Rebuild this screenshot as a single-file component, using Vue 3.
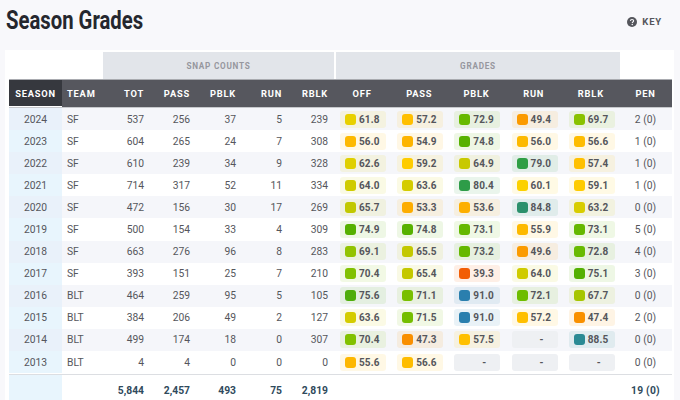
<script setup>
const stops = [[39,[242,92,5]],[47,[249,142,0]],[49.5,[251,154,0]],[53,[253,172,0]],[56,[253,185,0]],[57.5,[255,192,0]],[60,[253,209,0]],[62,[230,208,0]],[64,[207,203,0]],[66,[191,199,0]],[70,[133,194,0]],[72,[111,189,0]],[75,[85,176,0]],[79,[47,158,68]],[81,[46,155,74]],[85,[43,143,110]],[88.5,[42,138,148]],[91,[42,127,174]]]
function rgb(g) {
  let i = 0
  while (i < stops.length - 2 && g > stops[i + 1][0]) i++
  const [a, ca] = stops[i]
  const [b, cb] = stops[i + 1]
  const t = Math.min(1, Math.max(0, (g - a) / (b - a)))
  return ca.map((c, k) => Math.round(c + (cb[k] - c) * t)).join(',')
}
const rows = [
  ['2024','SF',537,256,37,5,239,[61.8,57.2,72.9,49.4,69.7],'2 (0)'],
  ['2023','SF',604,265,24,7,308,[56.0,54.9,74.8,56.0,56.6],'1 (0)'],
  ['2022','SF',610,239,34,9,328,[62.6,59.2,64.9,79.0,57.4],'1 (0)'],
  ['2021','SF',714,317,52,11,334,[64.0,63.6,80.4,60.1,59.1],'1 (0)'],
  ['2020','SF',472,156,30,17,269,[65.7,53.3,53.6,84.8,63.2],'0 (0)'],
  ['2019','SF',500,154,33,4,309,[74.9,74.8,73.1,55.9,73.1],'5 (0)'],
  ['2018','SF',663,276,96,8,283,[69.1,65.5,73.2,49.6,72.8],'4 (0)'],
  ['2017','SF',393,151,25,7,210,[70.4,65.4,39.3,64.0,75.1],'3 (0)'],
  ['2016','BLT',464,259,95,5,105,[75.6,71.1,91.0,72.1,67.7],'0 (0)'],
  ['2015','BLT',384,206,49,2,127,[63.6,71.5,91.0,57.2,47.4],'2 (0)'],
  ['2014','BLT',499,174,18,0,307,[70.4,47.3,57.5,null,88.5],'0 (0)'],
  ['2013','BLT',4,4,0,0,0,[55.6,56.6,null,null,null],'0 (0)'],
]
const snapHead = ['TOT','PASS','PBLK','RUN','RBLK']
const gradeHead = ['OFF','PASS','PBLK','RUN','RBLK']
const totals = ['5,844','2,457','493','75','2,819']
</script>

<template>
  <div class="page">
    <header class="top">
      <h1 class="title">Season Grades</h1>
      <div class="key">
        <svg class="key-icon" viewBox="0 0 16 16" width="10" height="10">
          <circle cx="8" cy="8" r="8" fill="#55565c" />
          <path d="M5.4 6.2C5.5 4.7 6.6 3.9 8 3.9c1.5 0 2.6.9 2.6 2.2 0 1-.6 1.5-1.3 2-.6.4-.8.7-.8 1.3" fill="none" stroke="#f8f8fb" stroke-width="1.8" />
          <circle cx="8.4" cy="12" r="1.2" fill="#f8f8fb" />
        </svg>
        <span>KEY</span>
      </div>
    </header>
    <section class="panel">
      <div class="bands">
        <div class="band band-snap">SNAP COUNTS</div>
        <div class="band band-grades">GRADES</div>
      </div>
      <div class="row head">
        <div class="season-h">SEASON</div>
        <div class="team">TEAM</div>
        <div v-for="h in snapHead" :key="'s' + h" class="num">{{ h }}</div>
        <div v-for="h in gradeHead" :key="'g' + h" class="ctr gh">{{ h }}</div>
        <div class="ctr">PEN</div>
      </div>
      <div v-for="(r, i) in rows" :key="r[0]" class="row body" :class="{ alt: i % 2 === 0 }">
        <div class="season">{{ r[0] }}</div>
        <div class="team">{{ r[1] }}</div>
        <div v-for="k in [2, 3, 4, 5, 6]" :key="k" class="num">{{ r[k] }}</div>
        <div v-for="(g, j) in r[7]" :key="j" class="gcell">
          <div v-if="g !== null" class="chip" :style="{ background: `rgba(${rgb(g)},.1)` }">
            <i class="dot" :style="{ background: `rgb(${rgb(g)})` }"></i>
            <b>{{ g.toFixed(1) }}</b>
          </div>
          <div v-else class="chip empty"><b>-</b></div>
        </div>
        <div class="ctr pen">{{ r[8] }}</div>
      </div>
      <div class="row total">
        <div class="season"></div>
        <div class="team"></div>
        <div v-for="t in totals" :key="t" class="num">{{ t }}</div>
        <div class="spacer"></div>
        <div class="ctr pen-total">19 (0)</div>
      </div>
    </section>
  </div>
</template>

<style scoped>
.page {
  height: 400px;
  overflow: hidden;
  background: #f8f8fb;
  font-family: Roboto, "Liberation Sans", sans-serif;
  color: #55565c;
}
.top {
  height: 50px;
  display: flex;
  justify-content: space-between;
  align-items: flex-start;
  padding: 0 18px 0 6px;
  box-sizing: border-box;
}
.title {
  margin: 5px 0 0;
  font-size: 26px;
  line-height: 30px;
  font-weight: 700;
  color: #25272e;
  transform: scaleX(.78);
  transform-origin: left center;
  white-space: nowrap;
}
.key {
  display: flex;
  align-items: center;
  gap: 5px;
  margin-top: 16px;
  font-size: 9.5px;
  line-height: 11px;
  font-weight: 700;
  letter-spacing: .8px;
  color: #55565c;
}
.key-icon { display: block; }
.panel {
  margin-left: 5px;
  width: 669px;
  height: 350px;
  background: #fff;
  padding: 2px 2px 0 4px;
  box-sizing: border-box;
}
.bands {
  display: flex;
  height: 27px;
  padding-left: 94px;
  box-sizing: border-box;
}
.band {
  background: #e2e5ea;
  color: #96979e;
  font-size: 8.2px;
  font-weight: 700;
  letter-spacing: .75px;
  display: flex;
  align-items: center;
  justify-content: center;
}
.band-snap { width: 231px; margin-right: 2px; }
.band-grades { width: 284px; }
.row {
  display: grid;
  grid-template-columns: 53px 41px repeat(5, 46px) repeat(5, 57.2px) 1fr;
  align-items: center;
}
.head {
  height: 29px;
  background: #56575e;
  border-top: 1px solid #a9abb0;
  border-bottom: 1px solid #c6c8cc;
  box-sizing: border-box;
  color: #fff;
  font-size: 9.3px;
  font-weight: 700;
  letter-spacing: .8px;
}
.head > div { line-height: 27px; }
.season-h {
  height: 27px;
  background: #36383e;
  border-bottom: 1px solid #fff;
  box-sizing: border-box;
  text-align: center;
}
.team { padding-left: 5px; }
.num { text-align: right; padding-right: 5px; }
.ctr { text-align: center; }
.gh { padding-left: 1px; }
.body {
  height: 22.1px;
  font-size: 10.3px;
}
.alt { background: #f5f6fa; }
.season {
  align-self: stretch;
  background: #e8f5fd;
  display: flex;
  align-items: center;
  justify-content: center;
}
.alt .season { background: #e9f1fa; }
.gcell { display: flex; justify-content: center; padding-left: 2.8px; }
.chip {
  width: 46px;
  height: 17px;
  border-radius: 3px;
  display: flex;
  align-items: center;
  box-sizing: border-box;
  padding-left: 5px;
}
.chip b { font-size: 10px; font-weight: 700; color: #55565b; letter-spacing: .1px; }
.dot {
  width: 11px;
  height: 11px;
  border-radius: 3px;
  margin-right: 3px;
}
.empty { background: #eef0f3; justify-content: center; padding-left: 14px; }
.total {
  height: 30px;
  border-top: 1px solid #dcdee2;
  box-sizing: border-box;
  font-size: 10.3px;
  font-weight: 700;
  color: #2f4a5c;
  margin-top: 1px;
}
.total .season { height: 30px; }
.spacer { grid-column: span 5; }
.pen-total { letter-spacing: .2px; }
</style>

<style>
html, body { margin: 0; background: #f8f8fb; }
</style>
